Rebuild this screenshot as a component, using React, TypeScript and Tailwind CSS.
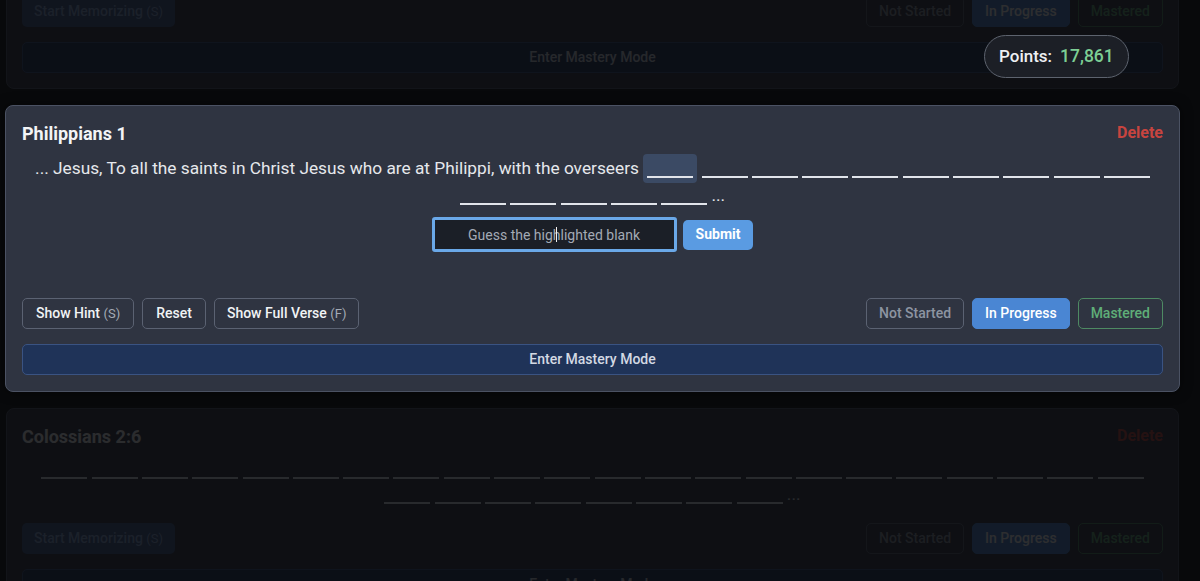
import React from "react";

const Blank = () => (
  <span className="inline-block h-[2px] w-[46px] bg-[#e1e4ea] align-[-4px]" />
);

function Blanks({ n }: { n: number }) {
  return (
    <>
      {Array.from({ length: n }).map((_, i) => (
        <React.Fragment key={i}>
          {" "}
          <Blank />
        </React.Fragment>
      ))}
    </>
  );
}

function StatusButtons() {
  return (
    <div className="flex items-center gap-2">
      <button className="h-[31px] rounded-[5px] border border-[#5b6272] px-3 text-[14px] font-medium text-[#8d94a1]">
        Not Started
      </button>
      <button className="h-[31px] rounded-[5px] border border-[#4a86d3] bg-[#4a86d3] px-3 text-[14px] font-medium text-white">
        In Progress
      </button>
      <button className="h-[31px] rounded-[5px] border border-[#4e8a63] px-3 text-[14px] font-medium text-[#5fae78]">
        Mastered
      </button>
    </div>
  );
}

function MasteryBar() {
  return (
    <button className="mt-[15px] h-[31px] w-full rounded-[5px] border border-[#3a5382] bg-[#1f3358] text-[14px] font-medium text-[#d3d9e3]">
      Enter Mastery Mode
    </button>
  );
}

function DimCard({ title, first, second }: { title: string; first: number; second: number }) {
  return (
    <div className="rounded-lg border border-[#3f4554] bg-[#2f3441] px-[15px] pb-[15px] pt-[15px]">
      <div className="opacity-50">
        <div className="flex h-[24px] items-center justify-between">
          <span className="text-[18px] font-bold text-[#f1f3f5]">{title}</span>
          <span className="text-[16px] font-bold text-[#c8443f]">Delete</span>
        </div>
        <p className="mt-[9px] text-center text-[17.3px] leading-[25px] text-[#e6e8ec]">
          <Blanks n={first} />
          <Blanks n={second} /> ...
        </p>
        <div className="mt-[16px] flex items-center justify-between">
          <button className="h-[31px] rounded-[5px] bg-[#3f5b8c] px-3 text-[14px] font-medium text-[#8aa8d6]">
            Start Memorizing <span className="text-[13px] font-normal">(S)</span>
          </button>
          <StatusButtons />
        </div>
        <MasteryBar />
      </div>
    </div>
  );
}

export default function App() {
  return (
    <div className="relative h-[581px] w-[1200px] overflow-hidden bg-[#1d2027] [font-family:Roboto,sans-serif]">
      <div className="relative mt-[-119px] flex flex-col gap-4 pl-[6px] pr-[21px]">
        <DimCard title="Ephesians 1:3" first={22} second={8} />

        <div className="relative z-20 -mx-[1px] rounded-lg border border-[#4b5263] bg-[#2f3441] px-[16px] pb-4 pt-[15px] shadow-[0_0_12px_rgba(0,0,0,0.5)]">
          <div className="flex h-[24px] items-center justify-between">
            <span className="text-[18px] font-bold text-[#f3f4f6]">Philippians 1</span>
            <span className="text-[16px] font-bold text-[#c8443f]">Delete</span>
          </div>
          <p className="mt-[9px] text-center text-[17.3px] leading-[25px] text-[#e6e8ec]">
            ... Jesus, To all the saints in Christ Jesus who are at Philippi, with the overseers{" "}
            <span className="inline-block rounded-[4px] bg-[#3b4a64] px-[4px] py-[2px]">
              <Blank />
            </span>
            <Blanks n={14} /> ...
          </p>
          <div className="mt-[9px] flex items-center justify-center gap-1.5">
            <div className="relative">
              <input
                className="box-border h-[35px] w-[245px] rounded-[3px] border-[3px] border-[#6aa8e8] bg-[#1b1f27] text-center text-[14px] text-white outline-none placeholder:text-[#a3aab5]"
                placeholder="Guess the highlighted blank"
              />
              <span className="pointer-events-none absolute left-[124px] top-[10px] h-[15px] w-[1px] bg-[#f0f0f0]" />
            </div>
            <button className="h-[30px] rounded-[5px] bg-[#5a9be2] px-[13px] text-[14px] font-bold text-white">
              Submit
            </button>
          </div>
          <div className="mt-[46px] flex items-center justify-between">
            <div className="flex items-center gap-2">
              <button className="h-[31px] rounded-[5px] border border-[#5b6272] px-[13px] text-[14px] font-medium text-[#f1f3f5]">
                Show Hint <span className="text-[13px] font-normal text-[#a4abb6]">(S)</span>
              </button>
              <button className="h-[31px] rounded-[5px] border border-[#5b6272] px-[13px] text-[14px] font-medium text-[#f1f3f5]">
                Reset
              </button>
              <button className="h-[31px] rounded-[5px] border border-[#5b6272] px-[12px] text-[14px] font-medium text-[#f1f3f5]">
                Show Full Verse <span className="text-[13px] font-normal text-[#a4abb6]">(F)</span>
              </button>
            </div>
            <StatusButtons />
          </div>
          <MasteryBar />
        </div>

        <DimCard title="Colossians 2:6" first={22} second={8} />

        <div className="pointer-events-none absolute inset-0 z-10 bg-black/70" />
      </div>

      <div className="absolute left-[984px] top-[35px] z-30 flex h-[43px] items-center gap-2 rounded-full border border-[#5d636e] bg-[#1c1f26] px-[14px]">
        <span className="text-[17px] font-medium text-[#eef0f3]">Points:</span>
        <span className="text-[17.5px] font-medium text-[#7dcf94]">17,861</span>
      </div>
    </div>
  );
}
